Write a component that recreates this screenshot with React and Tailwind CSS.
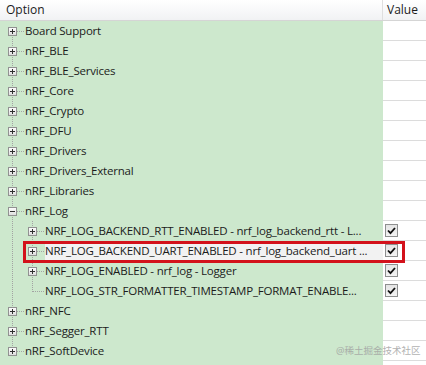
import React from "react";

const rows = [
  { label: "Board Support", level: 0, exp: "plus", first: true },
  { label: "nRF_BLE", level: 0, exp: "plus" },
  { label: "nRF_BLE_Services", level: 0, exp: "plus" },
  { label: "nRF_Core", level: 0, exp: "plus" },
  { label: "nRF_Crypto", level: 0, exp: "plus" },
  { label: "nRF_DFU", level: 0, exp: "plus" },
  { label: "nRF_Drivers", level: 0, exp: "plus" },
  { label: "nRF_Drivers_External", level: 0, exp: "plus" },
  { label: "nRF_Libraries", level: 0, exp: "plus" },
  { label: "nRF_Log", level: 0, exp: "minus" },
  { label: "NRF_LOG_BACKEND_RTT_ENABLED - nrf_log_backend_rtt - L...", level: 1, exp: "plus", check: true },
  { label: "NRF_LOG_BACKEND_UART_ENABLED - nrf_log_backend_uart ...", level: 1, exp: "plus", check: true, selected: true },
  { label: "NRF_LOG_ENABLED - nrf_log - Logger", level: 1, exp: "plus", check: true },
  { label: "NRF_LOG_STR_FORMATTER_TIMESTAMP_FORMAT_ENABLE...", level: 1, exp: null, check: true, lastChild: true },
  { label: "nRF_NFC", level: 0, exp: "plus" },
  { label: "nRF_Segger_RTT", level: 0, exp: "plus" },
  { label: "nRF_SoftDevice", level: 0, exp: "plus", last: true },
];

const DOT = "#a3a3a3";

function ExpBox({ cx, minus }) {
  const x0 = cx - 4;
  return (
    <g shapeRendering="crispEdges">
      <rect x={x0 + 0.5} y={6.5} width={8} height={8} fill="url(#boxg)" stroke="#919191" />
      <line x1={cx - 2} y1={10.5} x2={cx + 3} y2={10.5} stroke="#2f2f2f" />
      {!minus && <line x1={cx + 0.5} y1={8} x2={cx + 0.5} y2={13} stroke="#2f2f2f" />}
    </g>
  );
}

function Gutter({ r }) {
  const w = r.level === 0 ? 25 : 45;
  return (
    <svg width={w} height={20} className="shrink-0 block">
      <defs>
        <linearGradient id="boxg" x1="0" y1="0" x2="0" y2="1">
          <stop offset="0" stopColor="#ffffff" />
          <stop offset="1" stopColor="#dcdcdc" />
        </linearGradient>
      </defs>
      <g stroke={DOT} strokeDasharray="1 1" shapeRendering="crispEdges">
        {r.level === 0 && (
          <>
            <line x1={12.5} y1={r.first ? 10 : 0} x2={12.5} y2={r.last ? 10 : 20} />
            <line x1={17} y1={10.5} x2={24} y2={10.5} />
          </>
        )}
        {r.level === 1 && (
          <>
            <line x1={12.5} y1={0} x2={12.5} y2={20} />
            <line x1={32.5} y1={0} x2={32.5} y2={r.lastChild ? 11 : 20} />
            <line x1={r.exp ? 37 : 33} y1={10.5} x2={44} y2={10.5} />
          </>
        )}
      </g>
      {r.exp && <ExpBox cx={r.level === 0 ? 12 : 32} minus={r.exp === "minus"} />}
    </svg>
  );
}

function Check() {
  return (
    <div className="w-[13px] h-[13px] border border-[#8e8f8f] bg-gradient-to-b from-[#e4e4e4] to-[#f4f4f4] flex items-center justify-center">
      <svg width="9" height="8" viewBox="0 0 9 8">
        <path d="M1 3.5 L3.5 6.2 L8 1" fill="none" stroke="#111" strokeWidth="1.8" />
      </svg>
    </div>
  );
}

export default function App() {
  return (
    <div
      className="relative w-[426px] h-[365px] overflow-hidden bg-[#cde8cd] text-[11.5px] tracking-[-0.2px] text-[#1b1b1b]"
      style={{ fontFamily: '"Open Sans", "Noto Sans", sans-serif' }}
    >
      <div className="flex h-[21px] border-b border-[#d5d5d5] bg-gradient-to-b from-[#ffffff] to-[#f1f2f4] text-[12px] tracking-normal">
        <div className="w-[383px] pl-[6px] flex items-center border-r border-[#dfdfdf]">Option</div>
        <div className="flex-1 pl-[4px] flex items-center">Value</div>
      </div>
      {rows.map((r, i) => (
        <div key={i} className="flex h-[20px]">
          <div className="w-[383px] flex items-center overflow-hidden">
            <Gutter r={r} />
            <div
              className={
                "flex-1 h-full flex items-center whitespace-nowrap overflow-hidden " +
                (r.selected ? "bg-[#f2f2f2]" : "")
              }
            >
              {r.label}
            </div>
          </div>
          <div className="flex-1 bg-white border-b border-[#dcdcdc] flex items-center pl-[2px]">
            {r.check && <Check />}
          </div>
        </div>
      ))}
      <div className="flex h-[4px]">
        <div className="w-[383px]" />
        <div className="flex-1 bg-white" />
      </div>
      <div className="absolute left-[23px] top-[241px] w-[382px] h-[22px] border-[3px] border-[#d3121b] pointer-events-none" />
      <div
        className="absolute left-[336px] top-[345px] whitespace-nowrap text-[9.5px] leading-[12px] tracking-normal text-[#a0a0a0] opacity-80"
        style={{ fontFamily: '"Noto Sans", "Noto Sans CJK SC", sans-serif' }}
      >
        @稀土掘金技术社区
      </div>
    </div>
  );
}
